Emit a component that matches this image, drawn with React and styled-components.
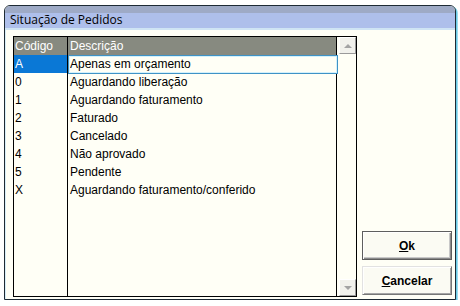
import React from "react";
import styled, { createGlobalStyle } from "styled-components";

const GlobalStyle = createGlobalStyle`
  html, body {
    margin: 0;
    background: #ffffff;
  }
  * { box-sizing: border-box; }
`;

const rows = [
  { code: "A", desc: "Apenas em orçamento" },
  { code: "0", desc: "Aguardando liberação" },
  { code: "1", desc: "Aguardando faturamento" },
  { code: "2", desc: "Faturado" },
  { code: "3", desc: "Cancelado" },
  { code: "4", desc: "Não aprovado" },
  { code: "5", desc: "Pendente" },
  { code: "X", desc: "Aguardando faturamento/conferido" },
];

export default function App() {
  return (
    <Page>
      <GlobalStyle />
      <Window>
        <TitleBar>Situação de Pedidos</TitleBar>
        <Body>
          <Grid>
            <Table>
              <Row header>
                <CodeCell header>Código</CodeCell>
                <DescCell header>Descrição</DescCell>
              </Row>
              {rows.map((r, i) => (
                <Row key={r.code}>
                  <CodeCell selected={i === 0}>{r.code}</CodeCell>
                  <DescCell focused={i === 0}>{r.desc}</DescCell>
                </Row>
              ))}
              <Filler>
                <CodeCell />
                <DescCell />
              </Filler>
            </Table>
            <ScrollBar>
              <ScrollButton>
                <Arrow up />
              </ScrollButton>
              <ScrollButton>
                <Arrow />
              </ScrollButton>
            </ScrollBar>
          </Grid>
          <Side>
            <Button isDefault>
              <u>O</u>k
            </Button>
            <Button>
              <u>C</u>ancelar
            </Button>
          </Side>
        </Body>
      </Window>
    </Page>
  );
}

const Page = styled.div`
  padding: 5px 0 0 4px;
`;

const Window = styled.div`
  width: 452px;
  height: 295px;
  border: 1px solid #1e2a34;
  border-radius: 6px 6px 0 0;
  box-shadow: 1px 1px 0 #6ccbe6, 2px 2px 0 #9fdff0;
  display: flex;
  flex-direction: column;
  overflow: hidden;
  background: #fffff6;
`;

const TitleBar = styled.div`
  height: 24px;
  padding: 2px 0 0 5px;
  display: flex;
  align-items: center;
  font-family: "Open Sans", "Liberation Sans", sans-serif;
  font-size: 12px;
  color: #000;
  background: linear-gradient(#9eaac6 0, #9eaac6 7px, #aebfeb 7px, #aebfeb 22px, #cfe4f4 22px);
`;

const Body = styled.div`
  flex: 1;
  display: flex;
  gap: 5px;
  padding: 6px 3px 2px 7px;
  border-left: 1px solid #d8eef8;
`;

const Grid = styled.div`
  width: 344px;
  border: 1px solid #000;
  display: flex;
  font-family: "Liberation Sans", Arial, sans-serif;
  font-size: 12px;
`;

const Table = styled.div`
  flex: 1;
  display: flex;
  flex-direction: column;
  border-right: 1px solid #000;
`;

const Row = styled.div`
  display: flex;
  height: 18px;
  background: ${(p) => (p.header ? "#878a80" : "transparent")};
  color: ${(p) => (p.header ? "#ffffff" : "#000000")};
`;

const Filler = styled.div`
  display: flex;
  flex: 1;
`;

const CodeCell = styled.div`
  width: 54px;
  border-right: 1px solid #000;
  padding-left: 1px;
  line-height: 19px;
  white-space: nowrap;
  background: ${(p) => (p.selected ? "#0a78d6" : "transparent")};
  color: ${(p) => (p.selected ? "#ffffff" : "inherit")};
`;

const DescCell = styled.div`
  flex: 1;
  position: relative;
  padding-left: 2px;
  line-height: 19px;
  white-space: nowrap;
  &::after {
    content: "";
    display: ${(p) => (p.focused ? "block" : "none")};
    position: absolute;
    left: 0;
    top: 0;
    right: -2px;
    bottom: -1px;
    border: 1px solid #3f93c6;
    box-shadow: inset 0 0 0 1px #d4f1fb;
  }
`;

const ScrollBar = styled.div`
  width: 19px;
  display: flex;
  flex-direction: column;
  justify-content: space-between;
  padding: 0 1px 0 2px;
`;

const ScrollButton = styled.div`
  width: 17px;
  height: 17px;
  background: #f1f1ec;
  border: 1px solid;
  border-color: #ffffff #9a9a9a #9a9a9a #ffffff;
  display: flex;
  align-items: center;
  justify-content: center;
`;

const Arrow = styled.div`
  width: 0;
  height: 0;
  border-left: 4px solid transparent;
  border-right: 4px solid transparent;
  ${(p) =>
    p.up
      ? "border-bottom: 4px solid #a3a3a3;"
      : "border-top: 4px solid #a3a3a3;"}
`;

const Side = styled.div`
  width: 90px;
  display: flex;
  flex-direction: column;
  justify-content: flex-end;
  gap: 6px;
  padding-bottom: 2px;
`;

const Button = styled.div`
  height: 29px;
  display: flex;
  align-items: center;
  justify-content: center;
  font-family: "Liberation Sans", Arial, sans-serif;
  font-size: 12px;
  font-weight: bold;
  color: #000;
  background: #fbfbf3;
  border: 1px solid;
  border-color: ${(p) =>
    p.isDefault ? "#5e5e5e" : "#e2e2e2 #777777 #777777 #e2e2e2"};
  box-shadow: ${(p) =>
    p.isDefault
      ? "inset 1px 1px 0 #ffffff, inset -1px -1px 0 #8a8a8a, inset -2px -2px 0 #c8c8c8"
      : "inset 1px 1px 0 #ffffff, inset -1px -1px 0 #a6a6a6"};
  u {
    text-decoration: underline;
  }
`;
